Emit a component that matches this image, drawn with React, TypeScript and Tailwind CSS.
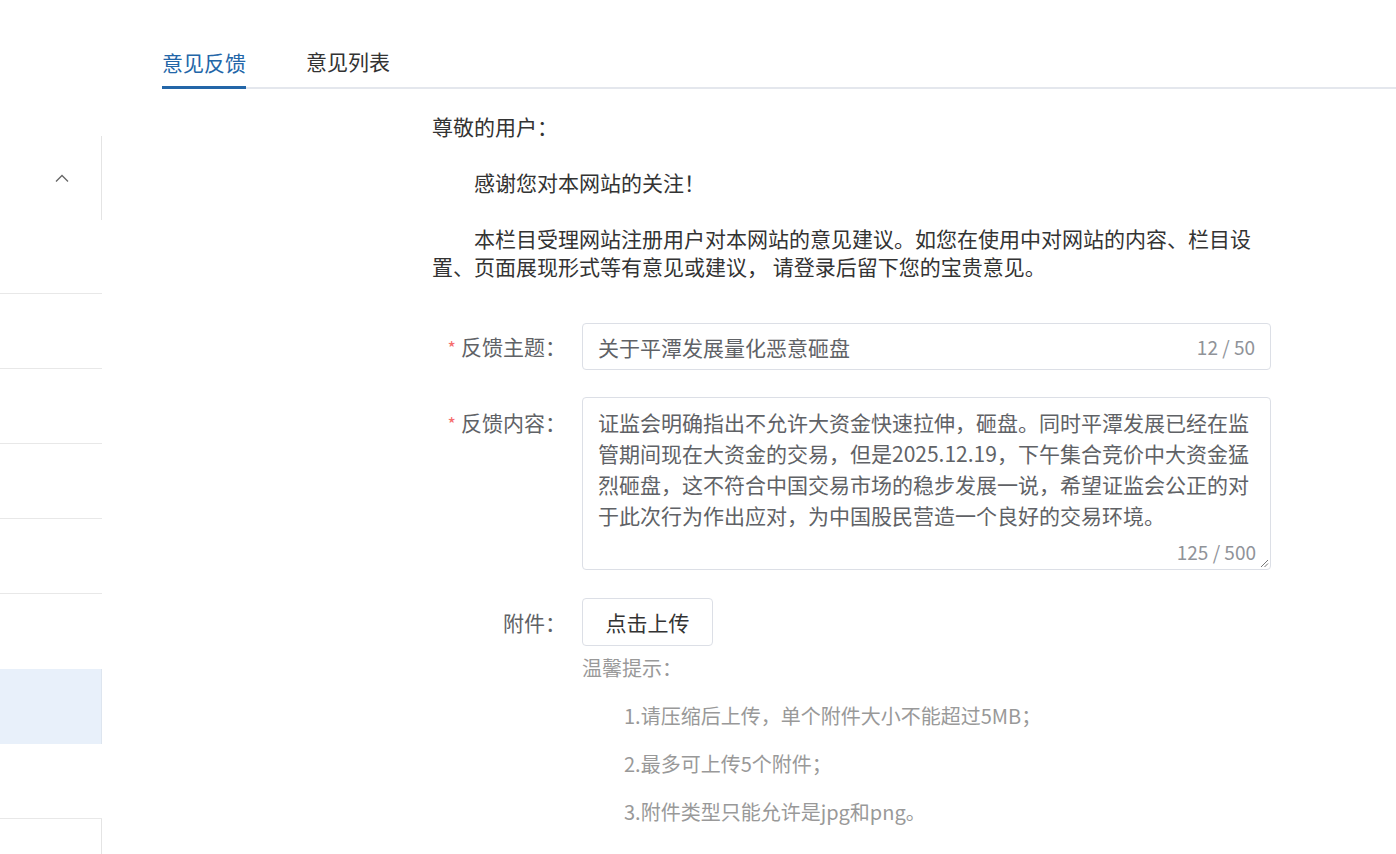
import React from "react";

const font = { fontFamily: '"Noto Sans CJK SC", "Noto Sans", sans-serif' };

function Sidebar() {
  return (
    <div className="w-[102px] shrink-0 flex flex-col">
      <div className="h-[136px]" />
      <div className="h-[84px] border-r border-[#e4e4e4] flex items-center justify-end pr-[32px]">
        <svg width="14" height="9" viewBox="0 0 14 9" fill="none">
          <path d="M1 7.5 L7 1.5 L13 7.5" stroke="#666" strokeWidth="1.3" />
        </svg>
      </div>
      <div className="h-[74px] border-b border-[#e8e8e8]" />
      <div className="h-[75px] border-b border-[#e8e8e8]" />
      <div className="h-[75px] border-b border-[#e8e8e8]" />
      <div className="h-[75px] border-b border-[#e8e8e8]" />
      <div className="h-[75px] border-b border-[#e8e8e8]" />
      <div className="h-[75px]" />
      <div className="h-[75px] bg-[#e8f0fa] border-r border-[#dde5ef]" />
      <div className="h-[75px] border-b border-[#e8e8e8]" />
      <div className="flex-1 border-r border-[#e4e4e4]" />
    </div>
  );
}

function Label({ text, required }: { text: string; required?: boolean }) {
  return (
    <div className="w-[150px] shrink-0 text-right pr-[16px] text-[21px] leading-[28px] text-[#606266]">
      {required && <span className="text-[#f56c6c] mr-[5px] text-[18px]">*</span>}
      {text}
    </div>
  );
}

export default function App() {
  return (
    <div className="w-[1396px] h-[854px] bg-white flex overflow-hidden" style={font}>
      <Sidebar />
      <div className="flex-1 flex flex-col">
        <div className="ml-[60px] h-[89px] border-b-2 border-[#e4e7ed] flex items-end gap-[60px]">
          <div className="text-[21px] leading-[28px] text-[#2366a8] pb-[10px] border-b-[3px] border-[#2366a8] -mb-[2px]">
            意见反馈
          </div>
          <div className="text-[21px] leading-[28px] text-[#333] pb-[12px]">意见列表</div>
        </div>

        <div className="ml-[330px] w-[839px] text-[#333] text-[21px] leading-[28px]">
          <p className="mt-[23px] mb-[28px]">尊敬的用户：</p>
          <p className="mb-[28px] indent-[42px]">感谢您对本网站的关注！</p>
          <p className="whitespace-nowrap">
            <span className="inline-block pl-[42px]">本栏目受理网站注册用户对本网站的意见建议。如您在使用中对网站的内容、栏目设</span>
            <br />
            置、页面展现形式等有意见或建议， 请登录后留下您的宝贵意见。
          </p>

          <div className="mt-[43px] flex items-center">
            <Label text="反馈主题：" required />
            <div className="w-[689px] h-[47px] border border-[#dcdfe6] rounded-[4px] flex items-center justify-between px-[15px]">
              <span className="text-[21px] leading-[28px] text-[#606266]">关于平潭发展量化恶意砸盘</span>
              <span className="text-[19px] text-[#909399]">12 / 50</span>
            </div>
          </div>

          <div className="mt-[27px] flex items-start">
            <div className="pt-[11px]">
              <Label text="反馈内容：" required />
            </div>
            <div className="relative w-[689px] h-[173px] border border-[#dcdfe6] rounded-[4px] pl-[15px] pt-[9px] text-[21px] leading-[31px] text-[#606266] whitespace-nowrap">
              <div>证监会明确指出不允许大资金快速拉伸，砸盘。同时平潭发展已经在监</div>
              <div>管期间现在大资金的交易，但是2025.12.19，下午集合竞价中大资金猛</div>
              <div>烈砸盘，这不符合中国交易市场的稳步发展一说，希望证监会公正的对</div>
              <div>于此次行为作出应对，为中国股民营造一个良好的交易环境。</div>
              <span className="absolute right-[14px] bottom-[5px] text-[19px] leading-[24px] text-[#909399]">125 / 500</span>
              <svg className="absolute right-[1px] bottom-[1px]" width="10" height="10" viewBox="0 0 10 10">
                <path d="M9 2 L2 9 M9 5.5 L5.5 9" stroke="#777" strokeWidth="1" />
              </svg>
            </div>
          </div>

          <div className="mt-[28px] flex items-center">
            <Label text="附件：" />
            <div className="w-[131px] h-[48px] border border-[#dcdfe6] rounded-[4px] flex items-center justify-center text-[21px] text-[#333]">
              点击上传
            </div>
          </div>

          <div className="ml-[150px] -mt-[2px] text-[20px] leading-[48px] text-[#999]">
            <div>温馨提示：</div>
            <div className="pl-[42px]">1.请压缩后上传，单个附件大小不能超过5MB；</div>
            <div className="pl-[42px]">2.最多可上传5个附件；</div>
            <div className="pl-[42px]">3.附件类型只能允许是jpg和png。</div>
          </div>
        </div>
      </div>
    </div>
  );
}
